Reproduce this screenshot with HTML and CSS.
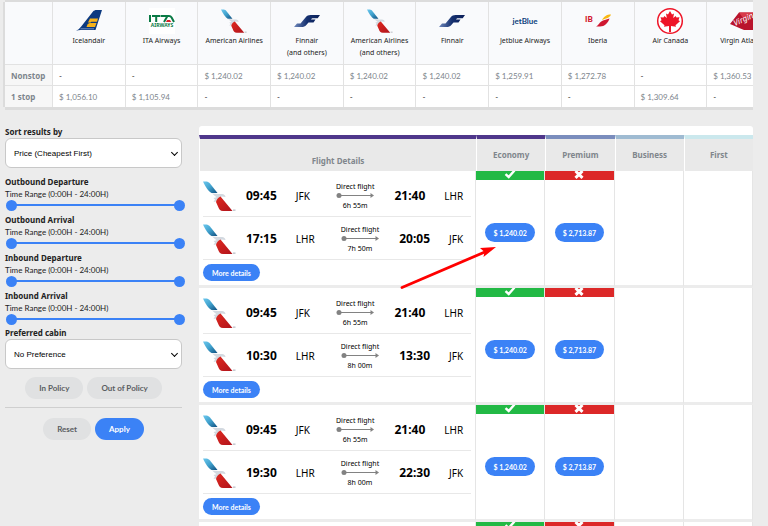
FILE: index.html
```html
<!DOCTYPE html>
<html lang="en">
<head>
    <meta charset="UTF-8">
    <meta name="viewport" content="width=device-width, initial-scale=1.0">
    <title>Flight results</title>
    <link rel="stylesheet" href="styles.css">
</head>
<body>
    <!-- shared icons -->
    <svg class="sprite" aria-hidden="true">
        <defs>
            <linearGradient id="aa-blue" x1="0" y1="0" x2="1" y2="1">
                <stop offset="0" stop-color="#6cc8ee"/>
                <stop offset="0.5" stop-color="#3fa0cc"/>
                <stop offset="1" stop-color="#0f4f80"/>
            </linearGradient>
            <linearGradient id="aa-red" x1="0" y1="0" x2="1" y2="1">
                <stop offset="0" stop-color="#e0281f"/>
                <stop offset="1" stop-color="#b0141c"/>
            </linearGradient>
            <linearGradient id="fin-blue" x1="0" y1="0" x2="1" y2="0">
                <stop offset="0" stop-color="#6f88bb"/>
                <stop offset="0.5" stop-color="#15306f"/>
                <stop offset="1" stop-color="#0b1f58"/>
            </linearGradient>
        </defs>
        <symbol id="american" viewBox="0 0 33 30">
            <path fill="url(#aa-blue)" d="M0 .5h3.500c1.500 0 2.500 1 3.500 2L14.500 12H8.500C5.500 10.500 2 5 0 .5z"/>
            <path fill="#d3d9e0" d="M9 12.500l6.500.5h3.500c2 .2 3.500 1.500 3.500 3l-4-.5-1.500 1.500-4 3.500-2.500.5 1.500-2.500-1.500-1.500 3-.7z"/>
            <path fill="url(#aa-red)" d="M17.500 15.500l12 14.500H20c-3 0-4-2-5-4.500l-2-4.500c.5-2.500 2-4.500 4.500-5.500z"/>
            <path fill="#b9bec6" d="M30 28.500h2.500v1.300H30z"/>
        </symbol>
        <symbol id="finnair" viewBox="0 0 26 12">
            <path fill="url(#fin-blue)" d="M26 0l-2.300 3.200H19c-.9 0-1.500.4-2 1.300h4.500L19.500 7.500h-5L12.300 10C11.100 11.400 9.500 12 7.500 12H0l3-3.500h3.500L11.500 2.500C13 .7 14.500 0 16.500 0z"/>
        </symbol>
        <symbol id="to-arrow" viewBox="0 0 38 6">
            <path stroke="#828282" d="M3 3.500h32" fill="none"/>
            <circle cx="3" cy="3.500" r="2.500" fill="#828282"/>
            <path fill="#828282" d="M34.500 1l3.500 2.500L34.500 6z"/>
        </symbol>
        <symbol id="check" viewBox="0 0 12 9">
            <path d="M1.500 3.200L4.700 6 10.500-.5" fill="none" stroke="#fff" stroke-width="2.400"/>
        </symbol>
        <symbol id="cross" viewBox="0 0 12 9">
            <path d="M2.500 0l7 6.800M9.500 0l-7 6.800" fill="none" stroke="#fff" stroke-width="3"/>
        </symbol>
    </svg>

    <div class="page">
        <div class="matrix">
            <table class="matrix-table">
                <thead>
                    <tr>
                        <td class="corner"></td>
                        <th><svg class="airline-logo" viewBox="0 0 26 26"><path fill="#0d3a80" d="M17 3.500C18 2.500 19 2 20.500 2H26L19.500 22H4.500C3 22 1.500 22.500 0 22.700 2 22 3.500 20.500 5 18.700z"/><path fill="#f6b21b" d="M14 10.500h8l-1 3.200h-5.500L13.500 15h7L19 19h-8.500l1.200-3 3-1.500H12z"/><path d="M4.500 20.800h13.500" stroke="#8fa6c9" stroke-width=".8"/></svg>Icelandair</th>
                        <th><svg class="airline-logo" viewBox="0 0 26 26"><path fill="#fff" d="M0 0h26v26H0z"/><path fill="none" stroke="#0a7a45" stroke-width="2" d="M1 7v7M3 8h8.500M7.200 8v6M12 8h8c1.500 0 2 .5 2.600 1.500L25 14M15 14l3.500-6"/><path fill="#d8202a" d="M18 12h3l1.300 2H17z"/><text class="ita-sub" x="13" y="19" text-anchor="middle" fill="#0a7a45">AIRWAYS</text></svg>ITA Airways</th>
                        <th><svg class="airline-logo"><use href="#american"/></svg>American Airlines</th>
                        <th><svg class="airline-logo"><use href="#finnair"/></svg>Finnair<br>(and others)</th>
                        <th><svg class="airline-logo"><use href="#american"/></svg>American Airlines<br>(and others)</th>
                        <th><svg class="airline-logo"><use href="#finnair"/></svg>Finnair</th>
                        <th><svg class="airline-logo" viewBox="0 0 26 26"><text class="jetblue" x="13" y="16" text-anchor="middle" fill="#0d3f7c">jetBlue</text></svg>Jetblue Airways</th>
                        <th><svg class="airline-logo" viewBox="0 0 26 26"><text class="iberia" x="0" y="14" fill="#d2142c">IB</text><path fill="#f9b812" d="M17 12c2-3.500 4.500-5.500 9-5.500-.7 2-2.500 3.500-5 4z"/><path fill="#cf1730" d="M11 18.500c3-1 3-4.500 7-6l6.500-2c-1.500 4.500-5 8-9.500 8z"/></svg>Iberia</th>
                        <th><svg class="airline-logo" viewBox="0 0 26 26"><circle cx="13" cy="13" r="12.300" fill="#fff" stroke="#ee1528" stroke-width="1.500"/><path fill="#ee1528" d="M13 3l2 3.500 2-1-.8 4.500 2.500-2 .8 1.500 3-.3-1 3 1.500 1-4.500 4 .5 1.500-5-.6V24h-2v-5.900l-5 .6.500-1.500-4.500-4 1.500-1-1-3 3 .3.800-1.500 2.500 2L9 5.500l2 1z"/></svg>Air Canada</th>
                        <th><svg class="airline-logo" viewBox="0 0 26 26"><path fill="#b9142c" d="M0 16L9 4.500h17V22H14C9 20 5 18 0 16z"/><path fill="#d83a4a" d="M9 4.500h17L13 10z"/><text class="virgin" x="5" y="18" fill="#fff" transform="rotate(-24 5 18)">Virgin</text></svg>Virgin Atlantic</th>
                    </tr>
                </thead>
                <tbody>
                    <tr>
                        <th>Nonstop</th>
                        <td class="none">-</td>
                        <td class="none">-</td>
                        <td>$ 1,240.02</td>
                        <td>$ 1,240.02</td>
                        <td>$ 1,240.02</td>
                        <td>$ 1,240.02</td>
                        <td>$ 1,259.91</td>
                        <td>$ 1,272.78</td>
                        <td class="none">-</td>
                        <td>$ 1,360.53</td>
                    </tr>
                    <tr>
                        <th>1 stop</th>
                        <td>$ 1,056.10</td>
                        <td>$ 1,105.94</td>
                        <td class="none">-</td>
                        <td class="none">-</td>
                        <td class="none">-</td>
                        <td class="none">-</td>
                        <td class="none">-</td>
                        <td class="none">-</td>
                        <td>$ 1,309.64</td>
                        <td class="none">-</td>
                    </tr>
                </tbody>
            </table>
        </div>

        <div class="content">
            <form class="filters">
                <label class="filter-title" for="sort">Sort results by</label>
                <div class="select">
                    <select id="sort">
                        <option>Price (Cheapest First)</option>
                    </select>
                </div>

                <div class="ranges">
                    <div class="range-group">
                        <div class="filter-title">Outbound Departure</div>
                        <label for="out-dep">Time Range (0:00H - 24:00H)</label>
                        <div class="range">
                            <input id="out-dep" type="range" min="0" max="24" value="0">
                            <input type="range" min="0" max="24" value="24" aria-label="Outbound departure until">
                        </div>
                    </div>
                    <div class="range-group">
                        <div class="filter-title">Outbound Arrival</div>
                        <label for="out-arr">Time Range (0:00H - 24:00H)</label>
                        <div class="range">
                            <input id="out-arr" type="range" min="0" max="24" value="0">
                            <input type="range" min="0" max="24" value="24" aria-label="Outbound arrival until">
                        </div>
                    </div>
                    <div class="range-group">
                        <div class="filter-title">Inbound Departure</div>
                        <label for="in-dep">Time Range (0:00H - 24:00H)</label>
                        <div class="range">
                            <input id="in-dep" type="range" min="0" max="24" value="0">
                            <input type="range" min="0" max="24" value="24" aria-label="Inbound departure until">
                        </div>
                    </div>
                    <div class="range-group">
                        <div class="filter-title">Inbound Arrival</div>
                        <label for="in-arr">Time Range (0:00H - 24:00H)</label>
                        <div class="range">
                            <input id="in-arr" type="range" min="0" max="24" value="0">
                            <input type="range" min="0" max="24" value="24" aria-label="Inbound arrival until">
                        </div>
                    </div>
                </div>

                <label class="filter-title" for="cabin">Preferred cabin</label>
                <div class="select">
                    <select id="cabin">
                        <option>No Preference</option>
                    </select>
                </div>

                <div class="buttons policy">
                    <button type="button" class="btn">In Policy</button>
                    <button type="button" class="btn">Out of Policy</button>
                </div>
                <div class="buttons actions">
                    <button type="reset" class="btn">Reset</button>
                    <button type="button" class="btn primary">Apply</button>
                </div>
            </form>

            <div class="results">
                <table class="fares">
                    <thead>
                        <tr>
                            <th class="details">Flight Details</th>
                            <th class="economy">Economy</th>
                            <th class="premium">Premium</th>
                            <th class="business">Business</th>
                            <th class="first">First</th>
                        </tr>
                    </thead>
                    <tbody>
                        <tr>
                            <td class="flight">
                                <div class="leg">
                                    <svg class="leg-logo"><use href="#american"/></svg>
                                    <span class="time">09:45</span>
                                    <span class="code">JFK</span>
                                    <span class="route">Direct flight<svg><use href="#to-arrow"/></svg>6h 55m</span>
                                    <span class="time">21:40</span>
                                    <span class="code">LHR</span>
                                </div>
                                <div class="leg">
                                    <svg class="leg-logo"><use href="#american"/></svg>
                                    <span class="time">17:15</span>
                                    <span class="code">LHR</span>
                                    <span class="route">Direct flight<svg><use href="#to-arrow"/></svg>7h 50m</span>
                                    <span class="time">20:05</span>
                                    <span class="code">JFK</span>
                                </div>
                                <button type="button" class="btn primary more">More details</button>
                            </td>
                            <td><div class="policy-in"><svg><use href="#check"/></svg></div><button type="button" class="btn primary price">$ 1,240.02</button></td>
                            <td><div class="policy-out"><svg><use href="#cross"/></svg></div><button type="button" class="btn primary price">$ 2,713.87</button></td>
                            <td></td>
                            <td></td>
                        </tr>
                        <tr>
                            <td class="flight">
                                <div class="leg">
                                    <svg class="leg-logo"><use href="#american"/></svg>
                                    <span class="time">09:45</span>
                                    <span class="code">JFK</span>
                                    <span class="route">Direct flight<svg><use href="#to-arrow"/></svg>6h 55m</span>
                                    <span class="time">21:40</span>
                                    <span class="code">LHR</span>
                                </div>
                                <div class="leg">
                                    <svg class="leg-logo"><use href="#american"/></svg>
                                    <span class="time">10:30</span>
                                    <span class="code">LHR</span>
                                    <span class="route">Direct flight<svg><use href="#to-arrow"/></svg>8h 00m</span>
                                    <span class="time">13:30</span>
                                    <span class="code">JFK</span>
                                </div>
                                <button type="button" class="btn primary more">More details</button>
                            </td>
                            <td><div class="policy-in"><svg><use href="#check"/></svg></div><button type="button" class="btn primary price">$ 1,240.02</button></td>
                            <td><div class="policy-out"><svg><use href="#cross"/></svg></div><button type="button" class="btn primary price">$ 2,713.87</button></td>
                            <td></td>
                            <td></td>
                        </tr>
                        <tr>
                            <td class="flight">
                                <div class="leg">
                                    <svg class="leg-logo"><use href="#american"/></svg>
                                    <span class="time">09:45</span>
                                    <span class="code">JFK</span>
                                    <span class="route">Direct flight<svg><use href="#to-arrow"/></svg>6h 55m</span>
                                    <span class="time">21:40</span>
                                    <span class="code">LHR</span>
                                </div>
                                <div class="leg">
                                    <svg class="leg-logo"><use href="#american"/></svg>
                                    <span class="time">19:30</span>
                                    <span class="code">LHR</span>
                                    <span class="route">Direct flight<svg><use href="#to-arrow"/></svg>8h 00m</span>
                                    <span class="time">22:30</span>
                                    <span class="code">JFK</span>
                                </div>
                                <button type="button" class="btn primary more">More details</button>
                            </td>
                            <td><div class="policy-in"><svg><use href="#check"/></svg></div><button type="button" class="btn primary price">$ 1,240.02</button></td>
                            <td><div class="policy-out"><svg><use href="#cross"/></svg></div><button type="button" class="btn primary price">$ 2,713.87</button></td>
                            <td></td>
                            <td></td>
                        </tr>
                        <tr>
                            <td class="flight"></td>
                            <td><div class="policy-in"><svg><use href="#check"/></svg></div></td>
                            <td><div class="policy-out"><svg><use href="#cross"/></svg></div></td>
                            <td></td>
                            <td></td>
                        </tr>
                    </tbody>
                </table>
                <!-- pointer to the economy fare -->
                <svg class="pointer" viewBox="0 0 98 46" aria-hidden="true">
                    <path d="M3 43.500L87 7.500" stroke="#f00" stroke-width="2.800" stroke-linecap="round"/>
                    <path d="M97 3L81 4l4.500 4-1 5z" fill="#f00"/>
                </svg>
            </div>
        </div>
    </div>
</body>
</html>
```
FILE: styles.css
```css
* {
    box-sizing: border-box;
}
body {
    font-family: Lato, "Noto Sans", sans-serif;
    font-size: 8px;
    line-height: 12px;
    color: #222;
    background-color: #ececec;
    margin: 0;
    height: 100vh;
    overflow: hidden;
}
table {
    border-collapse: separate;
    border-spacing: 0;
    table-layout: fixed;
}
th,
.filter-title {
    font-family: "Noto Sans", sans-serif;
    font-weight: bold;
}
svg {
    display: block;
}
.sprite {
    position: absolute;
    width: 0;
    height: 0;
}
.page {
    padding: 2px 15px 0 5px;
}

/* price matrix */
.matrix {
    overflow: hidden;
    background-color: #fff;
    box-shadow: -2px 0 #dcdcdc, 0 -2px #dcdcdc, 0 3px #dcdcdc;
}
.matrix-table {
    width: 775px;
}
.matrix-table th,
.matrix-table td {
    padding: 1px 6px 0;
    height: 21px;
    text-align: left;
    color: #7d858c;
    border-right: 1px solid #e2e2e2;
    border-bottom: 1px solid #e2e2e2;
}
.matrix-table tbody tr:last-child th,
.matrix-table tbody tr:last-child td {
    border-bottom: none;
}
.matrix-table tbody th {
    background-color: #f7f7f7;
}
.matrix-table td.none {
    color: #222;
}
.matrix-table .corner {
    width: 48px;
}
.matrix-table thead th,
.matrix-table thead td {
    height: 63px;
    padding: 6px 0 0;
    vertical-align: top;
    text-align: center;
    font-size: 7px;
    font-weight: normal;
    color: #222;
    background-color: #f9fafc;
}
.airline-logo {
    width: 26px;
    height: 26px;
    margin: 0 auto 1px;
    overflow: visible;
}
.ita-sub {
    font: bold 5px "Noto Sans", sans-serif;
}
.jetblue {
    font: bold 8px Lato, sans-serif;
}
.iberia {
    font: 900 8px Lato, sans-serif;
}
.virgin {
    font: italic 8px "Noto Sans", sans-serif;
}

.content {
    display: flex;
    gap: 17px;
    margin-top: 19px;
}

/* filters */
.filters {
    flex: 0 0 177px;
}
.filters label,
.filter-title {
    display: block;
}
.select {
    position: relative;
}
.select select {
    display: block;
    width: 100%;
    height: 30px;
    padding: 0 8px;
    font: 8px "Liberation Sans", Arial, sans-serif;
    color: #000;
    background-color: #fff;
    border: 1px solid #c8c8c8;
    border-radius: 6px;
    appearance: none;
}
.select::after {
    content: "";
    position: absolute;
    right: 5px;
    top: 12px;
    width: 4px;
    height: 4px;
    border-right: 1px solid #000;
    border-bottom: 1px solid #000;
    transform: rotate(45deg);
    pointer-events: none;
}
.ranges {
    padding-top: 8px;
}
.range-group {
    margin-bottom: 2px;
}
.range-group:last-child {
    margin-bottom: 1px;
}
.range {
    position: relative;
    height: 12px;
    margin: 0 -3px 0 1px;
}
.range::before {
    content: "";
    position: absolute;
    left: 5px;
    right: 5px;
    top: 4px;
    height: 2px;
    background-color: #3b82f6;
}
.range input {
    position: absolute;
    left: 0;
    top: 0;
    width: 100%;
    height: 11px;
    margin: 0;
    appearance: none;
    background: none;
    pointer-events: none;
}
.range input::-webkit-slider-thumb {
    appearance: none;
    width: 11px;
    height: 11px;
    border-radius: 50%;
    background-color: #3b82f6;
    pointer-events: auto;
}
.buttons {
    display: flex;
    justify-content: center;
    gap: 4px;
}
.policy {
    padding: 8px 0;
    border-bottom: 1px solid #cfcfcf;
}
.actions {
    padding-top: 10px;
}
.btn {
    height: 22px;
    padding: 0 14px;
    font: bold 8px Lato, "Noto Sans", sans-serif;
    color: #5a5d61;
    background-color: #e0e1e2;
    border: none;
    border-radius: 11px;
    white-space: nowrap;
    cursor: pointer;
}
.btn.primary {
    color: #fff;
    background-color: #3b82f6;
}

/* results */
.results {
    flex: 1;
    position: relative;
    padding-top: 9px;
    background-color: #fff;
    border-radius: 3px;
}
.fares {
    width: 100%;
}
.fares th {
    height: 36px;
    padding: 0;
    color: #80868c;
    background-color: #e9e9e9;
    border-top: 4px solid #4f378b;
    border-left: 1px solid #fff;
}
.fares .details {
    width: 50%;
    padding-top: 12px;
}
.fares .premium {
    border-top-color: #7a8dbd;
}
.fares .business {
    border-top-color: #9fbbd2;
}
.fares .first {
    border-top-color: #cbe8ed;
}
.fares td {
    height: 117px;
    padding: 0;
    vertical-align: top;
    text-align: center;
    border-right: 1px solid #e5e5e5;
    border-bottom: 3px solid #ececec;
}
.fares .flight {
    padding: 3px 4px 0;
    text-align: left;
}
.leg {
    display: flex;
    align-items: center;
    height: 43px;
    padding-top: 2px;
    font-family: "Noto Sans", sans-serif;
    color: #000;
    border-bottom: 1px solid #e8e8e8;
}
.leg-logo {
    width: 33px;
    height: 30px;
    margin-right: 10px;
}
.time {
    margin-right: 19px;
    font-size: 12px;
    font-weight: bold;
}
.code {
    font-size: 10px;
}
.route {
    margin: 0 20px 0 26px;
    font-size: 7px;
    line-height: 10px;
    text-align: center;
}
.route svg {
    width: 38px;
    height: 6px;
    margin: 0 auto 3px;
}
.more {
    height: 17px;
    margin-top: 4px;
    padding: 0 9px;
    font-size: 7px;
}
.policy-in,
.policy-out {
    height: 9px;
    background-color: #22b945;
}
.policy-out {
    background-color: #dc2828;
}
.policy-in svg,
.policy-out svg {
    width: 12px;
    height: 9px;
    margin: 0 auto;
}
.price {
    height: 19px;
    margin-top: 43px;
    padding: 0 8px;
    font-size: 7px;
}
.pointer {
    position: absolute;
    left: 200px;
    top: 118px;
    width: 98px;
    height: 46px;
}
```
